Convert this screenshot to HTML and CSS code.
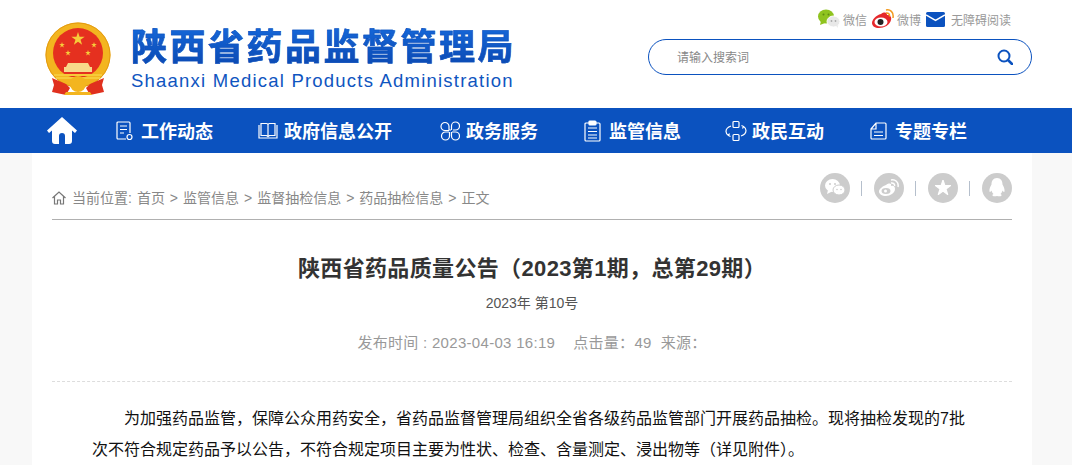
FILE: index.html
```html
<!DOCTYPE html>
<html lang="zh-CN">
<head>
    <meta charset="UTF-8">
    <meta name="viewport" content="width=device-width, initial-scale=1.0">
    <title>陕西省药品质量公告</title>
    <link rel="stylesheet" href="styles.css">
</head>
<body>
    <svg class="defs" width="0" height="0">
        <polygon id="star" points="0,-1 .225,-.309 .951,-.309 .363,.118 .588,.809 0,.382 -.588,.809 -.363,.118 -.951,-.309 -.225,-.309"/>
    </svg>

    <header class="header">
        <a class="logo">
            <svg class="emblem" width="70" height="74" viewBox="0 0 70 74">
                <circle cx="34" cy="33" r="32.500" fill="#f3b51f"/>
                <circle cx="34" cy="33" r="32" fill="none" stroke="#e39a12" stroke-width="1"/>
                <circle cx="34" cy="31" r="25" fill="#e5301f"/>
                <g fill="#f6cb3a">
                    <use href="#star" transform="translate(34 17) scale(7)"/>
                    <use href="#star" transform="translate(18 23) scale(3)"/>
                    <use href="#star" transform="translate(50 23) scale(3)"/>
                    <use href="#star" transform="translate(24 31) scale(3)"/>
                    <use href="#star" transform="translate(44 31) scale(3)"/>
                </g>
                <path d="M24 41h20l2 4h2v5H20v-5h2z" fill="#f8d98a"/>
                <rect x="10" y="52" width="48" height="2" fill="#f6cb3a"/>
                <rect x="12" y="55" width="44" height="2" fill="#f6cb3a"/>
                <path d="M8 56l14 6 4 4-4 7-14-3 2-7zM60 56l-14 6-4 4 4 7 14-3-2-7z" fill="#e0301e"/>
                <circle cx="34" cy="62" r="8" fill="#f3b51f"/>
                <path d="M22 70h24l2 3H20z" fill="#f3b51f"/>
            </svg>
            <div class="logo-text">
                <div class="logo-cn">陕西省药品监督管理局</div>
                <div class="logo-en">Shaanxi Medical Products Administration</div>
            </div>
        </a>
        <div class="header-right">
            <div class="top-links">
                <a class="top-link">
                    <svg width="22" height="20" viewBox="0 0 22 20">
                        <ellipse cx="8" cy="7.500" rx="8" ry="7" fill="#8fc31f"/>
                        <path d="M3 12l-1 4 5-2z" fill="#8fc31f"/>
                        <circle cx="5.500" cy="5.500" r="1" fill="#5f8f10"/>
                        <circle cx="10.500" cy="5.500" r="1" fill="#5f8f10"/>
                        <ellipse cx="15.500" cy="12.500" rx="6.500" ry="5.500" fill="#e8e8e8" stroke="#fff"/>
                        <path d="M18 16.500l2 2.500-.5-4z" fill="#e8e8e8"/>
                        <circle cx="13.500" cy="12" r=".9" fill="#aaa"/>
                        <circle cx="17.500" cy="12" r=".9" fill="#aaa"/>
                    </svg>
                    <span>微信</span>
                </a>
                <a class="top-link">
                    <svg width="22" height="20" viewBox="0 0 22 20">
                        <path d="M9 5c3-2 6-2 6 1 3 0 5 2 4 5-1 5-7 8-12 8-4 0-7-2-7-5 0-3 4-8 9-9z" fill="#e6282c"/>
                        <ellipse cx="9" cy="13" rx="6.500" ry="4.500" fill="#fff"/>
                        <circle cx="8.500" cy="13" r="3" fill="#222"/>
                        <path d="M14 1c4-1 8 2 7 8M14 4c2-.5 4 1 3.500 3.500" fill="none" stroke="#f39a1e" stroke-width="1.500"/>
                    </svg>
                    <span>微博</span>
                </a>
                <a class="top-link top-link-mail">
                    <svg width="19" height="15" viewBox="0 0 19 15">
                        <rect width="19" height="15" rx="1.500" fill="#0b52bf"/>
                        <path d="M0 3l9.500 5.500L19 3" fill="none" stroke="#fff" stroke-width="1.500"/>
                    </svg>
                    <span>无障碍阅读</span>
                </a>
            </div>
            <div class="search">
                <span class="search-text">请输入搜索词</span>
                <svg width="16" height="16" viewBox="0 0 16 16">
                    <circle cx="7" cy="7" r="5.500" fill="none" stroke="#0b52bf" stroke-width="2"/>
                    <path d="M11 11l4 4" stroke="#0b52bf" stroke-width="2.500" stroke-linecap="round"/>
                </svg>
            </div>
        </div>
    </header>

    <nav class="nav">
        <div class="nav-inner">
            <a class="nav-home">
                <svg width="30" height="27" viewBox="0 0 30 27">
                    <path d="M15 0L0 13.500l2 2.500 3-2.500V24a3 3 0 0 0 3 3h4v-8a3 3 0 0 1 6 0v8h4a3 3 0 0 0 3-3V13.500l3 2.500 2-2.500z" fill="#fff"/>
                </svg>
            </a>
            <a class="nav-item">
                <svg width="20" height="20" viewBox="0 0 20 20" class="nav-icon">
                    <path d="M11 18H3a1 1 0 0 1-1-1V2a1 1 0 0 1 1-1h11a1 1 0 0 1 1 1v10M5 5h7M5 8.500h7M5 12h4"/>
                    <circle cx="14.500" cy="16" r="2.500"/>
                </svg>
                <span>工作动态</span>
            </a>
            <a class="nav-item">
                <svg width="20" height="20" viewBox="0 0 20 20" class="nav-icon">
                    <path d="M1 4v13h18V4M3 2.500h5.500a1.500 1.500 0 0 1 1.500 1.500 1.500 1.500 0 0 1 1.500-1.500H17v12h-5.500L10 15.500 8.500 14.500H3zM10 4v11"/>
                </svg>
                <span>政府信息公开</span>
            </a>
            <a class="nav-item">
                <svg width="23" height="20" viewBox="-2 0 23 20" class="nav-icon">
                    <path d="M12 9h-2V5.500A4 4 0 1 0 6 9.500h4M14 9h2.500A4 4 0 1 0 12.500 5V9M10 11H6.500A4 4 0 1 0 10.500 15v-4M13 11h3.500a4 4 0 1 1-4 4v-4"/>
                </svg>
                <span>政务服务</span>
            </a>
            <a class="nav-item">
                <svg width="20" height="22" viewBox="0 0 20 22" class="nav-icon">
                    <path d="M6 3H3a1 1 0 0 0-1 1v16a1 1 0 0 0 1 1h13a1 1 0 0 0 1-1V4a1 1 0 0 0-1-1h-3M5 8h9M5 11.500h9M5 15h9M5 18h9"/>
                    <rect x="6" y="1" width="7" height="4" rx="1" fill="#fff"/>
                </svg>
                <span>监管信息</span>
            </a>
            <a class="nav-item">
                <svg width="22" height="22" viewBox="0 0 22 22" class="nav-icon nav-icon-wide">
                    <rect x="8" y="1.500" width="6" height="6" rx="1"/>
                    <rect x="8" y="14.500" width="6" height="6" rx="1"/>
                    <path d="M6 6C3 7 1 9 1 11.500c0 1.500 1 3 2.500 4M16 16c3-1 5-3 5-5.500 0-1.500-1-3-2.500-4M4.500 13.500l-1 2 2 1M17.500 8.500l1-2-2-1"/>
                </svg>
                <span>政民互动</span>
            </a>
            <a class="nav-item">
                <svg width="20" height="20" viewBox="0 0 20 20" class="nav-icon">
                    <path d="M2 8l5-6h9a1 1 0 0 1 1 1v14a1 1 0 0 1-1 1H3a1 1 0 0 1-1-1zM2 8h5V2M5 11h9M5 14.500h9"/>
                </svg>
                <span>专题专栏</span>
            </a>
        </div>
    </nav>

    <main class="main">
        <div class="crumb-bar">
            <div class="crumb">
                <svg width="14" height="14" viewBox="0 0 14 14" class="crumb-icon">
                    <path d="M.5 7L7 1l6.500 6M2.500 5.500V13h3V9h3v4h3V5.500" fill="none" stroke="#777" stroke-width="1.200"/>
                </svg>
                <span>当前位置: 首页 &gt; 监管信息 &gt; 监督抽检信息 &gt; 药品抽检信息 &gt; 正文</span>
            </div>
            <div class="share">
                <a class="share-btn">
                    <svg width="20" height="18" viewBox="0 0 20 18">
                        <ellipse cx="7.500" cy="6.500" rx="7.500" ry="6.500" fill="#fff"/>
                        <path d="M3 11l-1 4 5-2.500z" fill="#fff"/>
                        <ellipse cx="14" cy="11" rx="6" ry="5" fill="#fff" stroke="#ccc"/>
                        <circle cx="5" cy="5" r="1" fill="#ccc"/>
                        <circle cx="10" cy="5" r="1" fill="#ccc"/>
                        <circle cx="12" cy="10.500" r=".8" fill="#ccc"/>
                        <circle cx="16" cy="10.500" r=".8" fill="#ccc"/>
                    </svg>
                </a>
                <i class="share-sep"></i>
                <a class="share-btn">
                    <svg width="20" height="18" viewBox="0 0 20 18">
                        <path d="M7 6c3-2 6-2 5 1 3-1 4 1 4 3 0 4-5 7-9 7-4 0-7-2-7-4.500C0 10 4 7 7 6z" fill="#fff"/>
                        <ellipse cx="7" cy="12" rx="4.500" ry="3" fill="#ccc"/>
                        <circle cx="6.500" cy="12" r="1.500" fill="#fff"/>
                        <path d="M12 1c4-1 8 2 7 7M12 4c2-.5 4 1 3.500 3" fill="none" stroke="#fff" stroke-width="1.500"/>
                    </svg>
                </a>
                <i class="share-sep"></i>
                <a class="share-btn">
                    <svg width="16" height="16" viewBox="-1 -1 2 2">
                        <use href="#star" fill="#fff" stroke="#fff" stroke-width=".15" stroke-linejoin="round"/>
                    </svg>
                </a>
                <i class="share-sep"></i>
                <a class="share-btn">
                    <svg width="16" height="20" viewBox="0 0 16 20">
                        <path d="M8 0c4 0 5.500 3 5.500 6.500 1 1.500 2.500 5 2 7-.3 1-1.500 0-2-1-.3 1.500-1 2.500-2 3.500 1 .5 1.500 1 1 1.500-.5 1-3 1-4.500.5-1.500.5-4 .5-4.500-.5-.5-.5 0-1 1-1.500-1-1-1.700-2-2-3.500-.5 1-1.700 2-2 1-.5-2 1-5.500 2-7C2.500 3 4 0 8 0z" fill="#fff"/>
                    </svg>
                </a>
            </div>
        </div>

        <h1 class="title">陕西省药品质量公告（2023第1期，总第29期）</h1>
        <p class="subtitle">2023年 第10号</p>
        <p class="meta">发布时间 : 2023-04-03 16:19<span class="meta-gap">点击量：49</span><span class="meta-source">来源：</span></p>

        <div class="content">
            <p>为加强药品监管，保障公众用药安全，省药品监督管理局组织全省各级药品监管部门开展药品抽检。现将抽检发现的7批次不符合规定药品予以公告，不符合规定项目主要为性状、检查、含量测定、浸出物等（详见附件）。</p>
        </div>
    </main>
</body>
</html>
```

FILE: styles.css
```css
* {
    box-sizing: border-box;
}

html,
body {
    height: 100%;
    margin: 0;
    overflow: hidden;
}

body {
    font-family: "Liberation Sans", "Noto Sans CJK SC", sans-serif;
    background-color: #f8f8f8;
}

.defs {
    display: block;
    height: 0;
}

.header {
    height: 108px;
    background-color: #fff;
    display: flex;
    justify-content: space-between;
    padding: 0 40px 0 44px;
}

.logo {
    display: flex;
    align-items: flex-start;
    padding-top: 22px;
}

.emblem {
    display: block;
    flex: none;
}

.logo-text {
    margin-left: 17px;
    padding-top: 4px;
}

.logo-cn {
    font-size: 36px;
    line-height: 44px;
    font-weight: 700;
    letter-spacing: 2.5px;
    white-space: nowrap;
    color: #0b52c4;
    background: linear-gradient(#1568da, #0a46ae);
    -webkit-background-clip: text;
    background-clip: text;
    -webkit-text-fill-color: transparent;
    -webkit-text-stroke: .5px #0c50bd;
}

.logo-en {
    font-size: 18.5px;
    line-height: 22px;
    letter-spacing: 1.22px;
    color: #0f55c0;
    white-space: nowrap;
}

.header-right {
    width: 384px;
    padding-top: 9px;
}

.top-links {
    display: flex;
    justify-content: flex-end;
    align-items: center;
    height: 20px;
    padding-right: 21px;
    gap: 5px;
}

.top-link {
    display: flex;
    align-items: center;
    gap: 3px;
    font-size: 12px;
    color: #999;
}

.top-link-mail {
    gap: 6px;
}

.search {
    height: 36px;
    margin-top: 10px;
    border: 1px solid #0b52bf;
    border-radius: 18px;
    background-color: #fff;
    display: flex;
    align-items: center;
    justify-content: space-between;
    padding: 0 18px 0 28px;
}

.search-text {
    font-size: 12px;
    padding-bottom: 2px;
    color: #888;
}

.nav {
    height: 45px;
    background-color: #0b52bf;
}

.nav-inner {
    display: flex;
    align-items: center;
    gap: 45px;
    height: 100%;
    padding-left: 47px;
}

.nav-home {
    display: flex;
    margin-right: -7px;
}

.nav-item {
    display: flex;
    align-items: center;
    gap: 6px;
    font-size: 18px;
    font-weight: 700;
    color: #fff;
    white-space: nowrap;
}

.nav-item span {
    padding-bottom: 2px;
}

.nav-icon {
    flex: none;
    fill: none;
    stroke: #fff;
    stroke-width: 1.2;
}

.nav-icon-wide {
    margin: 0 -1px 0 -1px;
}

.main {
    width: 1000px;
    height: 312px;
    margin-left: 32px;
    padding: 0 20px;
    background-color: #fff;
}

.crumb-bar {
    height: 67px;
    display: flex;
    justify-content: space-between;
    align-items: flex-start;
    border-bottom: 1px solid #b0b0b0;
    padding-top: 20px;
}

.crumb {
    display: flex;
    align-items: center;
    gap: 6px;
    margin-top: 15px;
    font-size: 14px;
    line-height: 20px;
    word-spacing: 1.1px;
    color: #888;
}

.crumb-icon {
    flex: none;
}

.share {
    display: flex;
    align-items: center;
    gap: 11px;
}

.share-btn {
    width: 30px;
    height: 30px;
    border-radius: 50%;
    background-color: #ccc;
    display: flex;
    align-items: center;
    justify-content: center;
}

.share-sep {
    display: block;
    width: 1px;
    height: 15px;
    margin-right: 1px;
    background-color: #b5bfcc;
}

.title {
    margin: 31px 0 0;
    font-size: 22px;
    line-height: 36px;
    font-weight: 700;
    letter-spacing: .35px;
    color: #333;
    text-align: center;
}

.subtitle {
    margin: 6px 0 0;
    font-size: 14px;
    line-height: 20px;
    color: #555;
    text-align: center;
}

.meta {
    margin: 18px 0 0;
    height: 51px;
    padding-top: 1px;
    font-size: 15px;
    line-height: 22px;
    letter-spacing: .3px;
    color: #999;
    text-align: center;
    border-bottom: 1px dashed #ddd;
}

.meta-gap {
    margin-left: 18px;
}

.meta-source {
    margin-left: 9px;
}

.content {
    padding: 21px 40px 0;
}

.content p {
    margin: 0;
    font-size: 16px;
    line-height: 31px;
    color: #111;
    text-indent: 32px;
}
```
